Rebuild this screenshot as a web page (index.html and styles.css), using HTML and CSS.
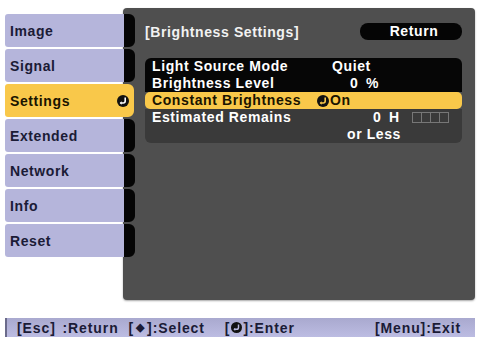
FILE: index.html
```html
<!DOCTYPE html>
<html>
<head>
<meta charset="utf-8">
<link rel="stylesheet" href="styles.css">
</head>
<body>
<div class="screen">
  <div class="main">
    <nav class="tabs">
      <div class="tab">Image</div>
      <div class="tab">Signal</div>
      <div class="tab active">Settings
        <svg class="enter" width="12" height="12" viewBox="0 0 12 12"><circle cx="6" cy="6" r="6" fill="#111"/><path d="M8.2 2.6 V6 Q8.2 8 6.2 8 H3.6" fill="none" stroke="#fff" stroke-width="1.6"/><path d="M4.6 6.2 L2.6 8 L4.6 9.8 Z" fill="#fff"/></svg>
      </div>
      <div class="tab">Extended</div>
      <div class="tab">Network</div>
      <div class="tab">Info</div>
      <div class="tab">Reset</div>
    </nav>
    <section class="panel">
      <div class="head">
        <span class="title">[Brightness Settings]</span>
        <span class="ret">Return</span>
      </div>
      <div class="list">
        <div class="row r1"><span class="lab">Light Source Mode</span><span class="val v1">Quiet</span></div>
        <div class="row r2"><span class="lab">Brightness Level</span><span class="val v2">0 %</span></div>
        <div class="row sel"><span class="lab">Constant Brightness</span><span class="val v3"><svg class="enter sm" width="12" height="12" viewBox="0 0 12 12"><circle cx="6" cy="6" r="6" fill="#111"/><path d="M8.2 2.6 V6 Q8.2 8 6.2 8 H3.6" fill="none" stroke="#f9c84a" stroke-width="1.6"/><path d="M4.6 6.2 L2.6 8 L4.6 9.8 Z" fill="#f9c84a"/></svg>On</span></div>
        <div class="row dim r4"><span class="lab">Estimated Remains</span><span class="val v4">0 H<span class="gauge"><i></i><i></i><i></i><i></i></span></span></div>
        <div class="row dim r5"><span class="lab"></span><span class="val v5">or Less</span></div>
      </div>
    </section>
  </div>
  <footer class="bar">
    <span class="k k1">[Esc] :Return</span>
    <span class="k k2">[<span class="dia">◆</span>]:Select</span>
    <span class="k k3">[<svg class="enter ft" width="11" height="11" viewBox="0 0 12 12"><circle cx="6" cy="6" r="6" fill="#111"/><path d="M8.2 2.6 V6 Q8.2 8 6.2 8 H3.6" fill="none" stroke="#b8b8de" stroke-width="1.6"/><path d="M4.6 6.2 L2.6 8 L4.6 9.8 Z" fill="#b8b8de"/></svg>]:Enter</span>
    <span class="k k4">[Menu]:Exit</span>
  </footer>
</div>
</body>
</html>
```
FILE: styles.css
```css
html, body {
  margin: 0;
  padding: 0;
  background: #fff;
}
body {
  width: 479px;
  height: 337px;
  overflow: hidden;
  font-family: "Liberation Sans", Arial, sans-serif;
  font-weight: bold;
}
.screen {
  display: flex;
  flex-direction: column;
  padding: 8px 4px 0 5px;
}
.main {
  display: flex;
  align-items: flex-start;
  height: 292px;
}
.tabs {
  position: relative;
  z-index: 1;
  display: flex;
  flex-direction: column;
  gap: 2px;
  margin-top: 6px;
  width: 130px;
  flex: none;
}
.tab {
  height: 33px;
  box-sizing: border-box;
  display: flex;
  align-items: center;
  padding-left: 5px;
  font-size: 14px;
  letter-spacing: 0.6px;
  color: #1b1b36;
  border-radius: 3px 6px 6px 3px;
  background: linear-gradient(to right, #b5b5db 0, #b5b5db 119px, #050505 119px);
}
.tab.active {
  background: #f9c84a;
  border-radius: 3px 6px 6px 3px;
  width: 129px;
  justify-content: space-between;
  padding-right: 5px;
  color: #1a1400;
}
.enter { display: block; }
.panel {
  margin-left: -12px;
  width: 352px;
  height: 292px;
  box-sizing: border-box;
  background: #4f4f4f;
  border-radius: 4px;
  box-shadow: 0 1px 2px rgba(0,0,0,0.35);
  padding: 15px 13px 0 22px;
  color: #fff;
  font-size: 14px;
  letter-spacing: 0.6px;
}
.head {
  display: flex;
  justify-content: space-between;
  align-items: center;
  height: 17px;
}
.title {
  color: #f2f2f2;
}
.ret {
  width: 102px;
  height: 17px;
  line-height: 17px;
  text-align: center;
  background: #050505;
  border-radius: 8px;
  padding-left: 6px;
  box-sizing: border-box;
}
.list {
  margin-top: 18px;
  display: flex;
  flex-direction: column;
}
.row {
  height: 17px;
  display: grid;
  grid-template-columns: 165px 1fr;
  align-items: center;
  padding-left: 7px;
  background: #060606;
  line-height: 17px;
  white-space: nowrap;
}
.r1 { border-radius: 6px 6px 0 0; }
.row.sel {
  background: #f9c84a;
  color: #1a1400;
  border-radius: 5px;
}
.row.dim { background: #3a3a3a; }
.r5 { border-radius: 0 0 6px 6px; }
.val { display: flex; align-items: center; }
.v1 { padding-left: 15px; }
.v2 { padding-left: 33px; word-spacing: 3px; }
.v3 { gap: 1px; }
.v4 { padding-left: 56px; word-spacing: 3px; }
.v5 { padding-left: 30px; }
.gauge {
  display: flex;
  margin-left: 12px;
  height: 11px;
}
.gauge i {
  display: block;
  width: 9px;
  height: 11px;
  border: 1px solid #777;
  border-right: none;
  box-sizing: border-box;
}
.gauge i:last-child { border-right: 1px solid #777; width: 10px; }
.bar {
  margin-top: 18px;
  height: 19px;
  background: linear-gradient(#a9a9cf, #bcbce2);
  border-left: 2px solid #6a6a8a;
  display: flex;
  align-items: center;
  font-size: 14px;
  letter-spacing: 0.9px;
  color: #1b1b36;
  white-space: nowrap;
}
.k { display: flex; align-items: center; }
.k1 { margin-left: 10px; word-spacing: 2px; }
.k2 { margin-left: 10px; }
.dia { font-size: 11px; margin: 0 2px; }
.k3 { margin-left: 20px; }
.ft { margin: 0 1px; }
.k4 { margin-left: auto; margin-right: 14px; }
```
